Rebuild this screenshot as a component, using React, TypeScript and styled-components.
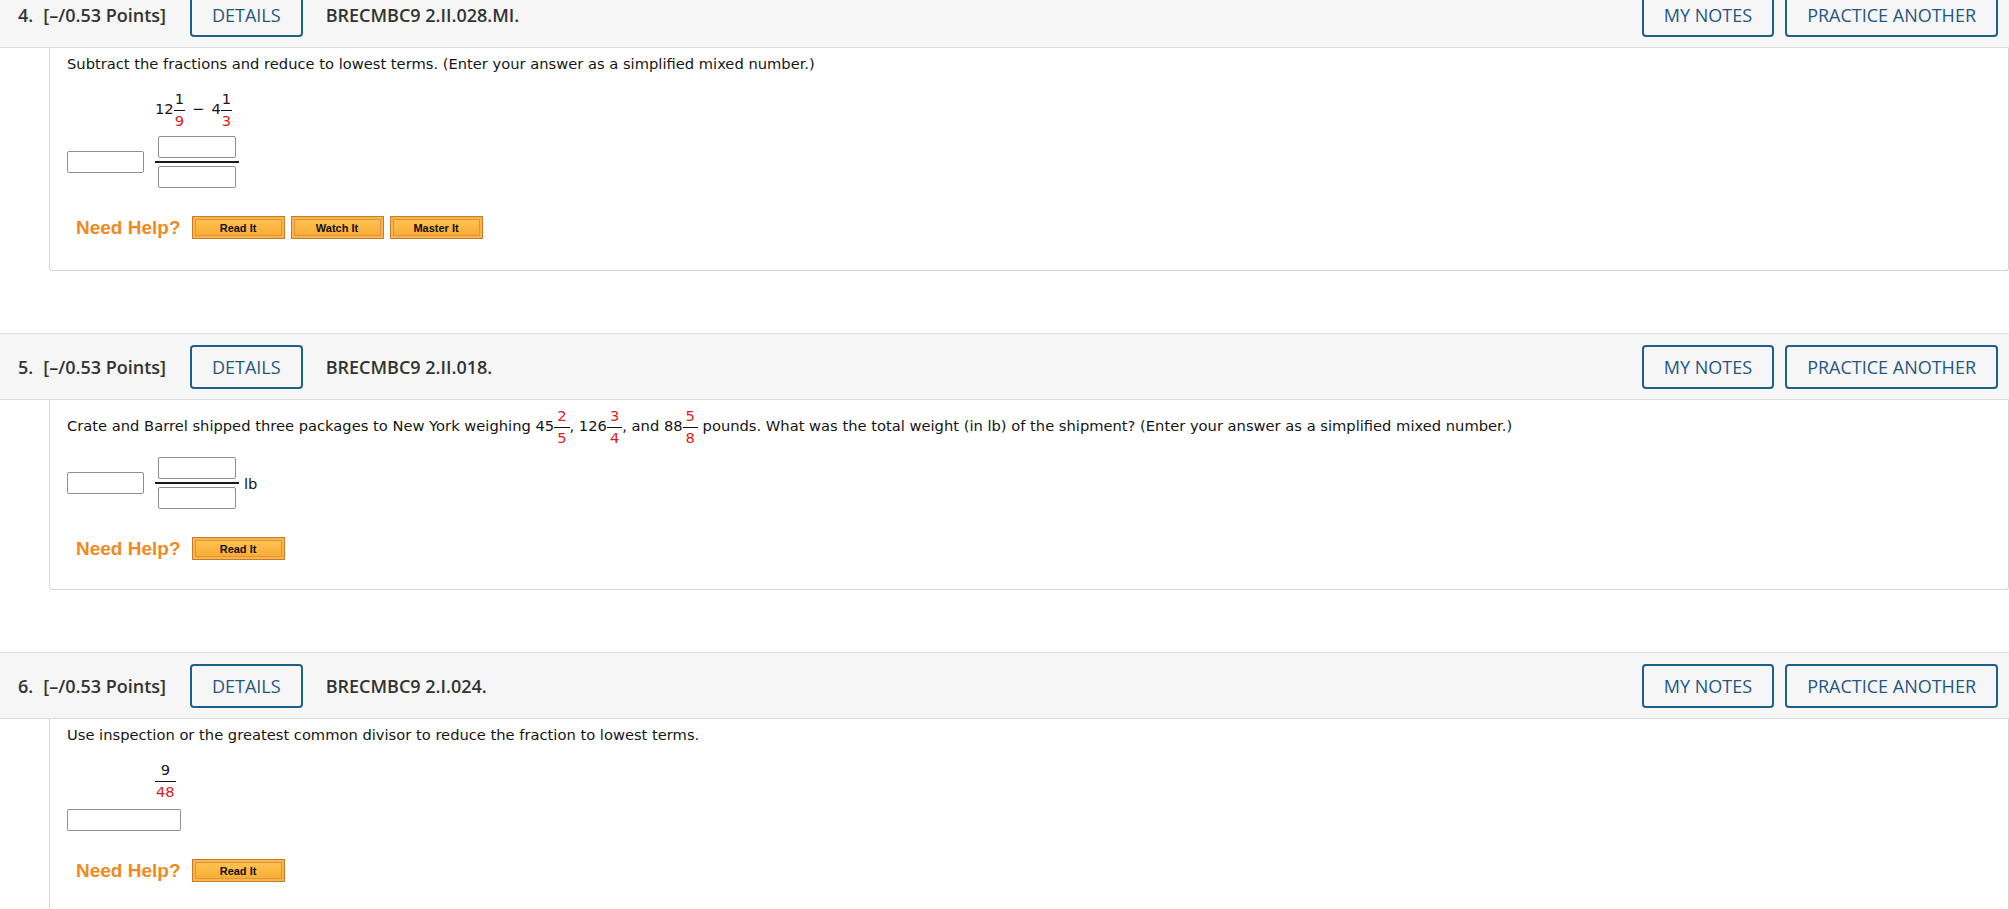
import React from "react";
import styled, { createGlobalStyle } from "styled-components";

const GlobalStyle = createGlobalStyle`
  html, body { margin: 0; padding: 0; background: #fff; }
  body { font-family: "Open Sans", sans-serif; overflow: hidden; }
`;

const Page = styled.div`
  width: 2009px;
`;

const Block = styled.section`
  margin-bottom: 62px;
  &:first-child { margin-top: -19px; }
`;

const Header = styled.div`
  display: flex;
  align-items: center;
  box-sizing: border-box;
  height: 67px;
  padding: 0 11px 0 18px;
  background: #f6f6f6;
  border-top: 1px solid #dedede;
  border-bottom: 1px solid #dedede;
  font-family: "Open Sans", sans-serif;
  font-size: 18px;
  color: #333;
`;

const Strong = styled.span<{ $gap?: number }>`
  font-weight: 600;
  margin-left: ${(p) => p.$gap ?? 0}px;
  white-space: nowrap;
`;

const OutlineButton = styled.button<{ $gap?: number }>`
  box-sizing: border-box;
  height: 44px;
  padding: 0 20px;
  margin-left: ${(p) => p.$gap ?? 0}px;
  background: transparent;
  border: 2px solid #1f5f8c;
  border-radius: 4px;
  font-family: "Open Sans", sans-serif;
  font-size: 18px;
  font-weight: 400;
  color: #1f5684;
  white-space: nowrap;
  cursor: pointer;
`;

const RightTools = styled.div`
  display: flex;
  gap: 11px;
  margin-left: auto;
`;

const Body = styled.div<{ $pt: number; $pb: number }>`
  margin-left: 49px;
  padding: ${(p) => p.$pt}px 0 ${(p) => p.$pb}px 17px;
  border: 1px solid #d6d6d6;
  border-top: none;
  border-radius: 0 0 3px 3px;
  font-family: Verdana, "DejaVu Sans", sans-serif;
  font-size: 14.7px;
  color: #151515;
`;

const Prompt = styled.p`
  margin: 0;
  line-height: 18px;
  white-space: nowrap;
`;

const FracBox = styled.span`
  display: inline-flex;
  flex-direction: column;
  align-items: center;
  vertical-align: middle;
  line-height: 16px;
`;

const FracPart = styled.span<{ $red?: boolean; $top?: boolean; $side: number }>`
  padding: ${(p) => (p.$top ? `0 ${p.$side}px 3px` : `2px ${p.$side}px 0`)};
  color: ${(p) => (p.$red ? "#e01b1b" : "inherit")};
  ${(p) => (p.$top ? "border-bottom: 1px solid #111; align-self: stretch; text-align: center;" : "")}
`;

type FracProps = { n: string; d: string; redTop?: boolean; spread?: boolean };

function Frac({ n, d, redTop, spread }: FracProps) {
  const side = spread ? 3 : 1;
  return (
    <FracBox>
      <FracPart $top $red={redTop} $side={side}>{n}</FracPart>
      <FracPart $red $side={side}>{d}</FracPart>
    </FracBox>
  );
}

const Expr = styled.div<{ $mt: number }>`
  margin: ${(p) => p.$mt}px 0 0 88px;
  line-height: 18px;
`;

const Minus = styled.span`
  margin: 0 7px;
`;

const AnswerRow = styled.div<{ $mt: number }>`
  display: flex;
  align-items: center;
  margin-top: ${(p) => p.$mt}px;
`;

const TextBox = styled.input<{ $w: number }>`
  box-sizing: border-box;
  width: ${(p) => p.$w}px;
  height: 22px;
  margin: 0;
  border: 1px solid #8e8e8e;
  border-radius: 2px;
  background: #fff;
`;

const Stack = styled.div`
  display: flex;
  flex-direction: column;
  align-items: center;
  gap: 3px;
  margin-left: 11px;
`;

const StackLine = styled.div`
  width: 84px;
  height: 2px;
  background: #1a1a1a;
`;

const Unit = styled.span`
  margin-left: 5px;
  font-size: 14.7px;
`;

const HelpRow = styled.div`
  display: flex;
  align-items: center;
  gap: 6px;
  margin-top: 28px;
  padding-left: 9px;
`;

const HelpLabel = styled.span`
  font-family: "Liberation Sans", Arial, sans-serif;
  font-weight: 700;
  font-size: 19px;
  color: #ee8a22;
  margin-right: 5px;
`;

const HelpButton = styled.button`
  box-sizing: border-box;
  width: 93px;
  height: 23px;
  padding: 0;
  border: 1px solid #c77b2c;
  background: linear-gradient(#ffc658, #f9a92f);
  box-shadow: inset 0 0 0 2px #fbb447, inset 0 0 0 3px #d99444;
  font-family: "Liberation Sans", Arial, sans-serif;
  font-weight: 700;
  font-size: 11px;
  color: #111;
  cursor: pointer;
`;

type QuestionProps = {
  num: number;
  code: string;
  pt: number;
  pb?: number;
  help: string[];
  children: React.ReactNode;
};

function Question({ num, code, pt, pb = 29, help, children }: QuestionProps) {
  return (
    <Block>
      <Header>
        <Strong>{num}.</Strong>
        <Strong $gap={10}>[–/0.53 Points]</Strong>
        <OutlineButton $gap={24}>DETAILS</OutlineButton>
        <Strong $gap={23}>{code}</Strong>
        <RightTools>
          <OutlineButton>MY NOTES</OutlineButton>
          <OutlineButton>PRACTICE ANOTHER</OutlineButton>
        </RightTools>
      </Header>
      <Body $pt={pt} $pb={pb}>
        {children}
        <HelpRow>
          <HelpLabel>Need Help?</HelpLabel>
          {help.map((h) => (
            <HelpButton key={h}>{h}</HelpButton>
          ))}
        </HelpRow>
      </Body>
    </Block>
  );
}

function FractionAnswer({ unit }: { unit?: string }) {
  return (
    <>
      <TextBox $w={77} />
      <Stack>
        <TextBox $w={78} />
        <StackLine />
        <TextBox $w={78} />
      </Stack>
      {unit && <Unit>{unit}</Unit>}
    </>
  );
}

export default function App() {
  return (
    <Page>
      <GlobalStyle />
      <Question num={4} code="BRECMBC9 2.II.028.MI." pt={7} pb={31} help={["Read It", "Watch It", "Master It"]}>
        <Prompt>
          Subtract the fractions and reduce to lowest terms. (Enter your answer as a simplified mixed number.)
        </Prompt>
        <Expr $mt={18}>
          12<Frac n="1" d="9" />
          <Minus>−</Minus>4<Frac n="1" d="3" />
        </Expr>
        <AnswerRow $mt={7}>
          <FractionAnswer />
        </AnswerRow>
      </Question>

      <Question num={5} code="BRECMBC9 2.II.018." pt={8} help={["Read It"]}>
        <Prompt>
          Crate and Barrel shipped three packages to New York weighing 45<Frac n="2" d="5" redTop spread />, 126
          <Frac n="3" d="4" redTop spread />, and 88<Frac n="5" d="8" redTop spread /> pounds. What was the total
          weight (in lb) of the shipment? (Enter your answer as a simplified mixed number.)
        </Prompt>
        <AnswerRow $mt={11}>
          <FractionAnswer unit="lb" />
        </AnswerRow>
      </Question>

      <Question num={6} code="BRECMBC9 2.I.024." pt={7} help={["Read It"]}>
        <Prompt>Use inspection or the greatest common divisor to reduce the fraction to lowest terms.</Prompt>
        <Expr $mt={18}>
          <Frac n="9" d="48" />
        </Expr>
        <AnswerRow $mt={9}>
          <TextBox $w={114} />
        </AnswerRow>
      </Question>
    </Page>
  );
}
